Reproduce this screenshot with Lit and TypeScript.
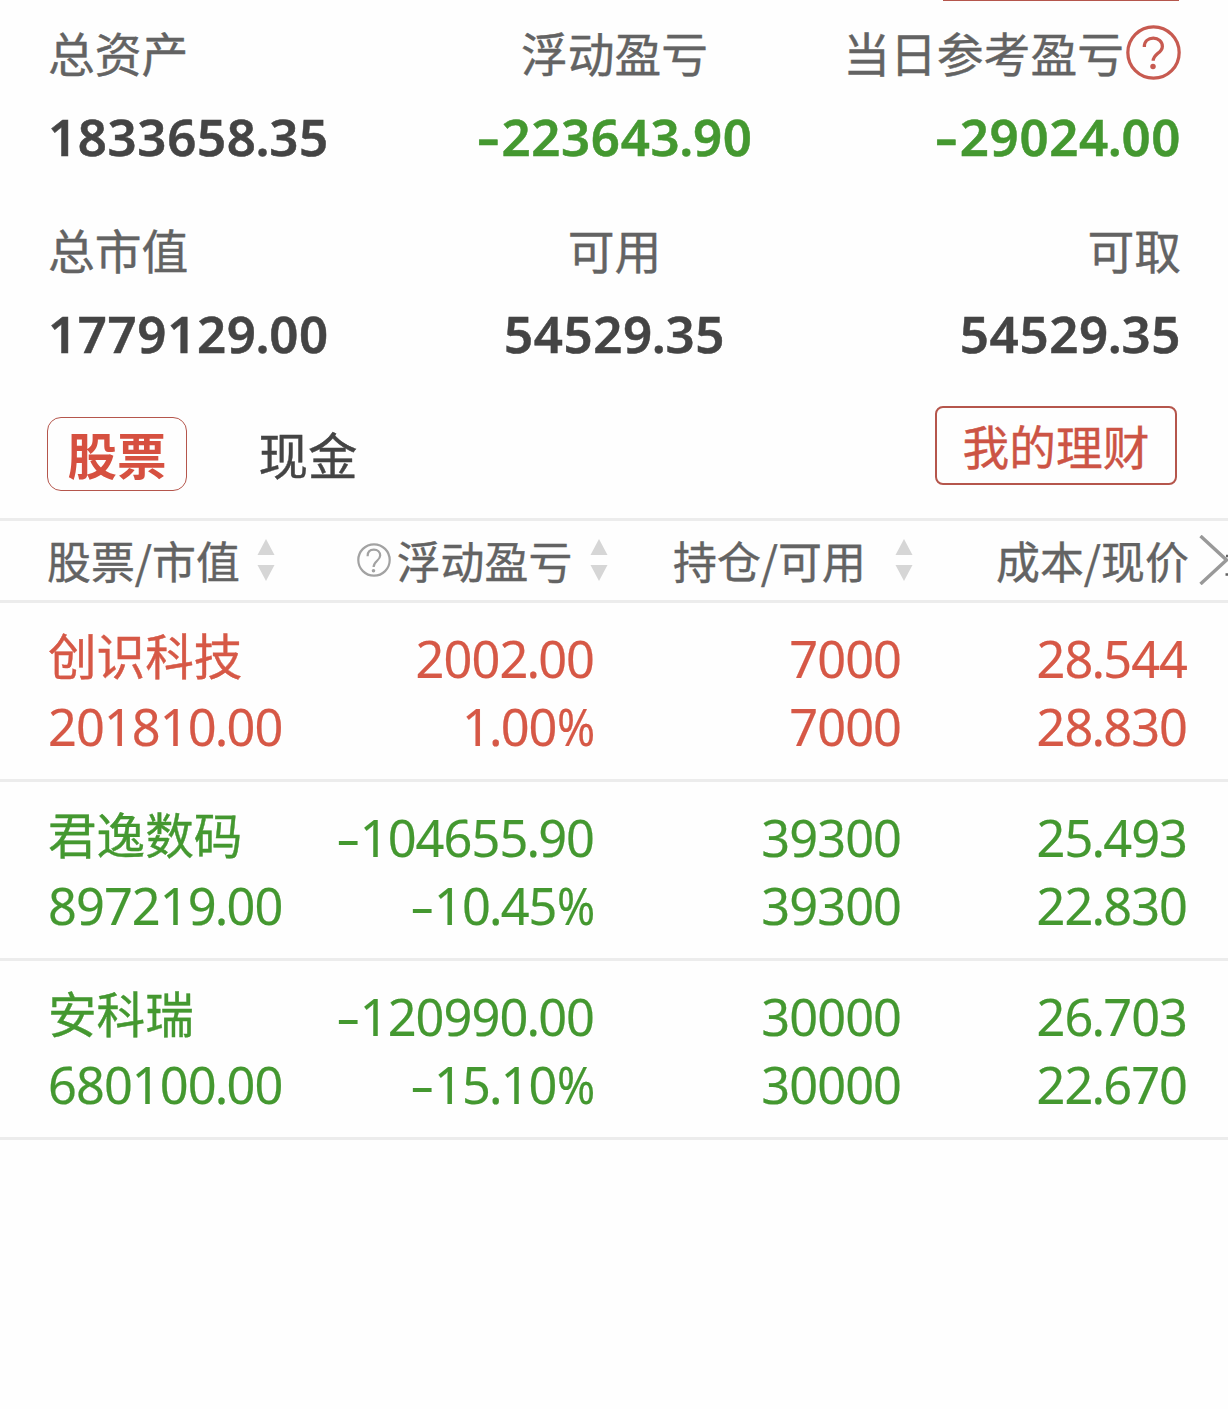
import { LitElement, html, css, svg } from "lit";
import { customElement, property } from "lit/decorators.js";

type Tone = "ink" | "up" | "down";

@customElement("num-text")
class NumText extends LitElement {
  @property() value = "";
  @property({ type: Boolean, reflect: true }) strong = false;

  static styles = css`
    :host {
      display: block;
      white-space: nowrap;
      font: 400 50.5px/68px "Noto Sans", sans-serif;
      letter-spacing: -0.95px;
      -webkit-text-stroke: 0.2px currentColor;
    }
    :host([strong]) {
      font-size: 51px;
      font-weight: 600;
      letter-spacing: 0.6px;
      -webkit-text-stroke: 0.5px currentColor;
    }
    .minus, .pct { display: inline-block; letter-spacing: 0; }
    .minus { width: 24px; text-align: left; transform: scaleX(1.5); transform-origin: 0 50%; }
    :host([strong]) .minus { width: 25px; transform: scaleX(1.38); }
    .dot { margin: 0 -0.9px; }
    :host([strong]) .dot { margin: 0 -1px; }
    .pct { width: 37.5px; transform: scaleX(0.91); transform-origin: 0 50%; }
  `;

  render() {
    return [...this.value].map((c) =>
      c === "-" ? html`<span class="minus">-</span>`
      : c === "." ? html`<span class="dot">.</span>`
      : c === "%" ? html`<span class="pct">%</span>`
      : c);
  }
}

const helpLarge = html`<svg class="help-lg" viewBox="0 0 54 54" fill="none" stroke="currentColor" stroke-width="3.2">
  <circle cx="27" cy="27" r="25.2"></circle>
  ${svg`<path d="M18 21.500C18 16 21.800 13 26.800 13s8.900 3.200 8.900 8c0 6.500-9 7.200-9 14.200"></path><circle cx="26.500" cy="40.800" r="2.700" fill="currentColor" stroke="none"></circle>`}
</svg>`;

const helpSmall = html`<svg class="help-sm" viewBox="0 0 34 34" fill="none" stroke="currentColor" stroke-width="2.2">
  <circle cx="17" cy="17" r="15.700"></circle>
  ${svg`<path d="M10.600 13.200C10.600 9 13.200 6.700 16.900 6.700s6.300 2.400 6.300 5.900c0 4.900-6.600 5.600-6.600 11.400"></path><circle cx="16.500" cy="27.800" r="1.800" fill="currentColor" stroke="none"></circle>`}
</svg>`;

const sort = html`<svg class="sort" viewBox="0 0 18 42"><path d="M9 0l8.500 16h-17zM9 42l8.500-16h-17z" fill="#d6d6d6"></path></svg>`;

const summary: { label: string; value: string; tone: Tone; help?: boolean }[] = [
  { label: "总资产", value: "1833658.35", tone: "ink" },
  { label: "浮动盈亏", value: "-223643.90", tone: "down" },
  { label: "当日参考盈亏", value: "-29024.00", tone: "down", help: true },
  { label: "总市值", value: "1779129.00", tone: "ink" },
  { label: "可用", value: "54529.35", tone: "ink" },
  { label: "可取", value: "54529.35", tone: "ink" },
];

const holdings: { name: string; tone: Tone; cells: string[] }[] = [
  { name: "创识科技", tone: "up", cells: ["2002.00", "7000", "28.544", "201810.00", "1.00%", "7000", "28.830"] },
  { name: "君逸数码", tone: "down", cells: ["-104655.90", "39300", "25.493", "897219.00", "-10.45%", "39300", "22.830"] },
  { name: "安科瑞", tone: "down", cells: ["-120990.00", "30000", "26.703", "680100.00", "-15.10%", "30000", "22.670"] },
];

@customElement("app-root")
class AppRoot extends LitElement {
  static styles = css`
    :host {
      display: block;
      width: 1228px;
      height: 1409px;
      overflow: hidden;
      background: #fefefe;
      color: #636363;
      font-family: "Noto Sans CJK SC", sans-serif;
    }
    * { box-sizing: border-box; }
    svg { display: block; flex: none; }
    .label, .cash, .wealth, .head, .name { -webkit-text-stroke: 0.4px currentColor; }
    .ink { color: #444; }
    .up { color: #d65846; }
    .down { color: #449830; }
    .top-edge { width: 236px; height: 1px; margin-left: 943px; background: #b5564c; }
    .summary {
      display: grid;
      grid-template-columns: 1fr 1fr 1fr;
      grid-auto-rows: 197px;
      padding: 16px 47px 0 48px;
      height: 405px;
    }
    .stat { display: flex; flex-direction: column; align-items: flex-start; }
    .stat:nth-child(3n + 2) { align-items: center; }
    .stat:nth-child(3n) { align-items: flex-end; }
    .label { display: flex; align-items: center; height: 70px; font-size: 46.8px; line-height: 70px; white-space: nowrap; }
    .stat num-text { margin-top: 15px; }
    .help-lg { width: 55px; height: 55px; margin: 1px 0 0 2px; color: #c75a50; }
    .tabs { display: flex; align-items: flex-start; height: 112px; padding: 0 51px 0 47px; }
    .tab { width: 140px; height: 74px; margin-top: 11px; border: 1px solid #b5564c; border-radius: 14px; font-size: 49.5px; line-height: 72px; text-align: center; font-weight: 700; color: #d65040; }
    .tab.cash { margin-left: 51px; border-color: transparent; font-weight: 400; color: #444; }
    .wealth { width: 242px; height: 79px; margin-left: auto; border: 2px solid #b5564c; border-radius: 8px; font-size: 46.7px; line-height: 73px; text-align: center; color: #cc5445; }
    .head { display: flex; align-items: center; height: 85px; border: solid #ececec; border-width: 3px 0; padding-left: 47px; font-size: 43.9px; line-height: 66px; white-space: nowrap; }
    .head > div { margin-top: -2px; }
    .sort { width: 18px; height: 42px; }
    .h1, .h2, .h3 { display: flex; align-items: center; justify-content: space-between; }
    .h1 { width: 228px; }
    .h2 { width: 251px; margin-left: 82px; }
    .h3 { width: 240px; margin-left: 65px; }
    .h4 { margin-left: 83px; }
    .help-sm { width: 34px; height: 34px; color: #a2a2a2; margin-right: -12px; }
    .more { width: 29px; height: 50px; margin: -2px 0 0 auto; }
    .row { display: grid; grid-template-columns: 246px 300px 307px 286px; grid-template-rows: 68px 68px; height: 179px; padding: 22px 0 0 48px; border-bottom: 3px solid #ececec; }
    .name { font-size: 48.6px; line-height: 58px; white-space: nowrap; }
    .row num-text { justify-self: end; }
    .row num-text.value { justify-self: start; }
  `;

  render() {
    return html`
      <div class="top-edge"></div>
      <section class="summary">
        ${summary.map((s) => html`<div class="stat">
          <div class="label">${s.label}${s.help ? helpLarge : ""}</div>
          <num-text strong class=${s.tone} .value=${s.value}></num-text>
        </div>`)}
      </section>
      <nav class="tabs">
        <div class="tab">股票</div>
        <div class="tab cash">现金</div>
        <div class="wealth">我的理财</div>
      </nav>
      <div class="head">
        <div class="h1"><span>股票/市值</span>${sort}</div>
        <div class="h2">${helpSmall}<span>浮动盈亏</span>${sort}</div>
        <div class="h3"><span>持仓/可用</span>${sort}</div>
        <div class="h4">成本/现价</div>
        <svg class="more" viewBox="0 0 29 50" fill="none" stroke="#999" stroke-width="3.4">
          <path d="M1.500 1L27.500 25 1.500 49"></path>
          <path d="M27 21h2M26.500 39.500h3" stroke="#636363" stroke-width="2.500"></path>
        </svg>
      </div>
      ${holdings.map((h) => html`<div class="row ${h.tone}">
        <div class="name">${h.name}</div>
        ${h.cells.map((c, i) => html`<num-text class=${i === 3 ? "value" : ""} .value=${c}></num-text>`)}
      </div>`)}
    `;
  }
}
